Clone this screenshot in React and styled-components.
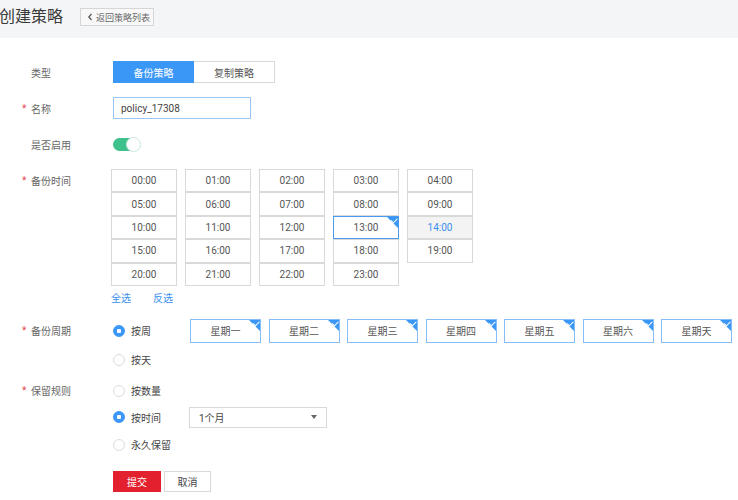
import React from "react";
import styled, { createGlobalStyle, css } from "styled-components";

const Global = createGlobalStyle`
  html, body { margin: 0; padding: 0; background: #fff; }
  body { font-family: Roboto, "Noto Sans CJK SC", sans-serif; color: #555; }
  * { box-sizing: border-box; }
`;

const BLUE = "#3b97f6";
const FONT = `Roboto, "Noto Sans CJK SC", sans-serif`;

const Page = styled.div`
  width: 738px;
  height: 500px;
  overflow: hidden;
  font-family: ${FONT};
`;

const Header = styled.div`
  height: 38px;
  background: #f4f5f7;
  display: flex;
  align-items: center;
  padding-bottom: 4px;
`;

const Title = styled.h1`
  margin: 0 0 0 -1px;
  font-size: 16px;
  font-weight: 400;
  color: #3a3a3a;
  line-height: 20px;
`;

const BackButton = styled.button`
  margin-left: 17px;
  height: 18px;
  width: 74px;
  border: 1px solid #d6d6d6;
  background: #f8f8f8;
  color: #666;
  font-family: ${FONT};
  font-size: 9px;
  padding: 0 0 0 6px;
  display: flex;
  align-items: center;
  gap: 3px;
  cursor: pointer;
`;

const Form = styled.div`
  display: flex;
  flex-direction: column;
`;

const Row = styled.div`
  display: flex;
  align-items: flex-start;
  margin-top: ${(p) => p.$mt}px;
`;

const LabelCell = styled.div`
  width: 113px;
  flex: none;
  padding-left: 22px;
  display: flex;
  align-items: center;
  height: ${(p) => p.$h}px;
  font-size: 10px;
  color: #666;
`;

const Star = styled.span`
  width: 9px;
  color: #e5484d;
  font-size: 10px;
`;

const Segmented = styled.div`
  display: flex;
  height: 22px;
`;

const Segment = styled.button`
  width: 81px;
  height: 22px;
  font-family: ${FONT};
  font-size: 10px;
  cursor: pointer;
  ${(p) =>
    p.$active
      ? css`
          background: ${BLUE};
          color: #fff;
          border: 1px solid ${BLUE};
        `
      : css`
          background: #fff;
          color: #555;
          border: 1px solid #d9d9d9;
          border-left: none;
        `}
`;

const TextInput = styled.input`
  width: 138px;
  height: 22px;
  border: 1px solid #9cc6f2;
  padding: 0 7px;
  font-family: ${FONT};
  font-size: 10px;
  color: #444;
  outline: none;
`;

const Toggle = styled.div`
  width: 27px;
  height: 13px;
  border-radius: 7px;
  background: #3fc18c;
  position: relative;
  margin-top: 0.5px;
`;

const Knob = styled.span`
  position: absolute;
  right: -1px;
  top: -1px;
  width: 15px;
  height: 15px;
  border-radius: 50%;
  background: #fff;
  border: 1px solid #c9e9db;
`;

const TimeGrid = styled.div`
  display: grid;
  grid-template-columns: repeat(5, 66px);
  grid-auto-rows: 23.4px;
  column-gap: 8px;
  margin-left: -2px;
`;

const Corner = styled.span`
  position: absolute;
  top: 0;
  right: 0;
  width: 0;
  height: 0;
  border-top: 11px solid ${BLUE};
  border-left: 11px solid transparent;
  &::after {
    content: "";
    position: absolute;
    top: -10px;
    right: 1px;
    width: 5px;
    height: 2.5px;
    border-left: 1.2px solid #fff;
    border-bottom: 1.2px solid #fff;
    transform: rotate(-45deg);
  }
`;

const TimeCell = styled.div`
  position: relative;
  display: flex;
  align-items: center;
  justify-content: center;
  font-size: 10px;
  color: ${(p) => (p.$hover ? "#3b8ff0" : "#555")};
  background: ${(p) => (p.$hover ? "#f3f3f3" : "#fff")};
  border: 1px solid ${(p) => (p.$selected ? "#4a9bf0" : "#d9d9d9")};
`;

const LinkRow = styled.div`
  display: flex;
  gap: 22px;
  margin-left: -2px;
  font-size: 10px;
  height: 14px;
  align-items: center;
`;

const Link = styled.a`
  color: #3b8ff0;
  cursor: pointer;
`;

const Options = styled.div`
  display: flex;
  flex-direction: column;
`;

const OptionLine = styled.div`
  display: flex;
  align-items: center;
  height: ${(p) => p.$h}px;
  margin-top: ${(p) => p.$mt || 0}px;
`;

const RadioOption = styled.label`
  display: flex;
  align-items: center;
  gap: 6px;
  font-size: 10px;
  color: #444;
  width: ${(p) => (p.$w ? `${p.$w}px` : "auto")};
  flex: none;
`;

const RadioDot = styled.span`
  width: 12px;
  height: 12px;
  border-radius: 50%;
  flex: none;
  ${(p) =>
    p.$checked
      ? css`
          border: 1px solid ${BLUE};
          background: radial-gradient(circle, #fff 0 2px, ${BLUE} 2.5px);
        `
      : css`
          background: #fff;
          border: 1px solid #dcdcdc;
        `}
`;

const Weekdays = styled.div`
  display: flex;
  gap: 7.5px;
`;

const DayBox = styled.div`
  position: relative;
  width: 71px;
  height: 24px;
  border: 1px solid #86bdf4;
  display: flex;
  align-items: center;
  justify-content: center;
  font-size: 10px;
  color: #555;
`;

const Select = styled.div`
  width: 138px;
  height: 21px;
  border: 1px solid #d9d9d9;
  display: flex;
  align-items: center;
  justify-content: space-between;
  padding: 0 9px 0 9px;
  font-size: 10px;
  color: #444;
`;

const Caret = styled.span`
  width: 0;
  height: 0;
  border-left: 3.5px solid transparent;
  border-right: 3.5px solid transparent;
  border-top: 4px solid #666;
`;

const Buttons = styled.div`
  display: flex;
  gap: 3px;
`;

const Btn = styled.button`
  width: ${(p) => (p.$primary ? 48 : 47)}px;
  height: 21px;
  font-family: ${FONT};
  font-size: 10px;
  cursor: pointer;
  ${(p) =>
    p.$primary
      ? css`
          background: #e3202e;
          color: #fff;
          border: 1px solid #e3202e;
        `
      : css`
          background: #fff;
          color: #444;
          border: 1px solid #d9d9d9;
        `}
`;

const times = Array.from({ length: 24 }, (_, i) => `${String(i).padStart(2, "0")}:00`);
const days = ["星期一", "星期二", "星期三", "星期四", "星期五", "星期六", "星期天"];

function Chevron() {
  return (
    <svg width="6" height="8" viewBox="0 0 6 8">
      <path d="M4.5 1 L1.8 4 L4.5 7" fill="none" stroke="#555" strokeWidth="1.2" />
    </svg>
  );
}

export default function App() {
  return (
    <Page>
      <Global />
      <Header>
        <Title>创建策略</Title>
        <BackButton>
          <Chevron />
          返回策略列表
        </BackButton>
      </Header>
      <Form>
        <Row $mt={23}>
          <LabelCell $h={22}>
            <Star />
            类型
          </LabelCell>
          <Segmented>
            <Segment $active>备份策略</Segment>
            <Segment>复制策略</Segment>
          </Segmented>
        </Row>
        <Row $mt={14}>
          <LabelCell $h={22}>
            <Star>*</Star>
            名称
          </LabelCell>
          <TextInput defaultValue="policy_17308" />
        </Row>
        <Row $mt={18}>
          <LabelCell $h={14}>
            <Star />
            是否启用
          </LabelCell>
          <Toggle>
            <Knob />
          </Toggle>
        </Row>
        <Row $mt={18}>
          <LabelCell $h={23}>
            <Star>*</Star>
            备份时间
          </LabelCell>
          <TimeGrid>
            {times.map((t) => (
              <TimeCell key={t} $selected={t === "13:00"} $hover={t === "14:00"}>
                {t}
                {t === "13:00" && <Corner />}
              </TimeCell>
            ))}
          </TimeGrid>
        </Row>
        <Row $mt={5}>
          <LabelCell $h={14} />
          <LinkRow>
            <Link>全选</Link>
            <Link>反选</Link>
          </LinkRow>
        </Row>
        <Row $mt={14}>
          <LabelCell $h={24}>
            <Star>*</Star>
            备份周期
          </LabelCell>
          <Options>
            <OptionLine $h={24}>
              <RadioOption $w={77}>
                <RadioDot $checked />
                按周
              </RadioOption>
              <Weekdays>
                {days.map((d) => (
                  <DayBox key={d}>
                    {d}
                    <Corner />
                  </DayBox>
                ))}
              </Weekdays>
            </OptionLine>
            <OptionLine $h={18} $mt={8}>
              <RadioOption>
                <RadioDot />
                按天
              </RadioOption>
            </OptionLine>
          </Options>
        </Row>
        <Row $mt={13}>
          <LabelCell $h={18}>
            <Star>*</Star>
            保留规则
          </LabelCell>
          <Options>
            <OptionLine $h={18}>
              <RadioOption>
                <RadioDot />
                按数量
              </RadioOption>
            </OptionLine>
            <OptionLine $h={21} $mt={7}>
              <RadioOption $w={76}>
                <RadioDot $checked />
                按时间
              </RadioOption>
              <Select>
                1个月
                <Caret />
              </Select>
            </OptionLine>
            <OptionLine $h={18} $mt={8}>
              <RadioOption>
                <RadioDot />
                永久保留
              </RadioOption>
            </OptionLine>
          </Options>
        </Row>
        <Row $mt={17}>
          <LabelCell $h={21} />
          <Buttons>
            <Btn $primary>提交</Btn>
            <Btn>取消</Btn>
          </Buttons>
        </Row>
      </Form>
    </Page>
  );
}
